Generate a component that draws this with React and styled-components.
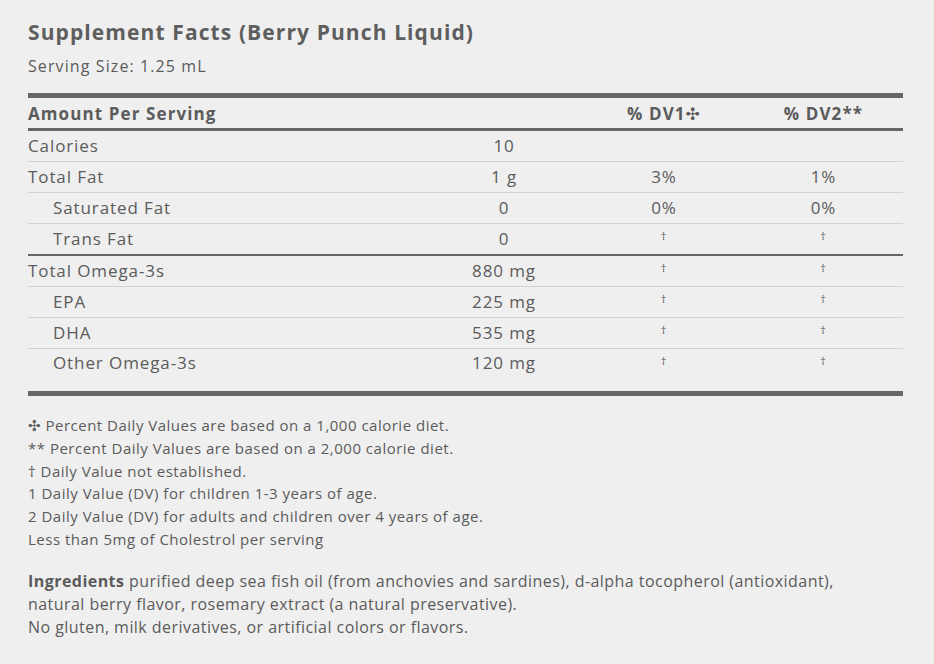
import styled, { createGlobalStyle } from "styled-components";

const GlobalStyle = createGlobalStyle`
  html, body {
    margin: 0;
    padding: 0;
    background: #efefef;
  }
  body {
    font-family: "Open Sans", "DejaVu Sans", sans-serif;
    color: #5b5b5b;
  }
`;

const Page = styled.div`
  width: 934px;
  height: 664px;
  box-sizing: border-box;
  padding: 17px 31px 0 28px;
  background: #efefef;
`;

const Title = styled.h2`
  margin: 0;
  font-size: 21px;
  font-weight: 700;
  line-height: 30px;
  letter-spacing: 1.1px;
  color: #5e5e5e;
`;

const Serving = styled.div`
  margin-top: 8px;
  font-size: 16px;
  line-height: 22px;
  letter-spacing: 1.1px;
`;

const Table = styled.table`
  width: 100%;
  margin-top: 16px;
  border-collapse: collapse;
  border-top: 5px solid #666;
  border-bottom: 5px solid #666;
  font-size: 17px;
  letter-spacing: 0.9px;
`;

const HeadCell = styled.th`
  height: 30px;
  padding: 0;
  font-weight: 700;
  font-size: 17px;
  letter-spacing: 1.1px;
  text-align: ${(p) => (p.$left ? "left" : "center")};
  border-bottom: 3px solid #666;
  color: #5b5b5b;
`;

const Row = styled.tr`
  border-bottom: ${(p) =>
    p.$last ? "none" : p.$heavy ? "2px solid #666" : "1px solid #d2d2d2"};
`;

const Cell = styled.td`
  height: ${(p) => (p.$tall ? "39px" : "30px")};
  vertical-align: ${(p) => (p.$tall ? "top" : "middle")};
  padding: ${(p) => (p.$tall ? "3px" : "0")} 0 0 ${(p) => (p.$indent ? "25px" : "0")};
  text-align: ${(p) => (p.$left ? "left" : "center")};
  line-height: 22px;
`;

const Dagger = styled.span`
  font-size: 11px;
  position: relative;
  top: -4px;
`;

const Notes = styled.div`
  margin-top: 18px;
  font-size: 15px;
  line-height: 22.8px;
  letter-spacing: 0.5px;
`;

const Ingredients = styled.p`
  margin: 19px 0 0;
  font-size: 16px;
  line-height: 23px;
  letter-spacing: 0.45px;
  b {
    font-weight: 700;
  }
`;

const rows = [
  { name: "Calories", amount: "10", dv1: "", dv2: "" },
  { name: "Total Fat", amount: "1 g", dv1: "3%", dv2: "1%" },
  { name: "Saturated Fat", amount: "0", dv1: "0%", dv2: "0%", indent: true },
  { name: "Trans Fat", amount: "0", dv1: "†", dv2: "†", indent: true, heavy: true },
  { name: "Total Omega-3s", amount: "880 mg", dv1: "†", dv2: "†" },
  { name: "EPA", amount: "225 mg", dv1: "†", dv2: "†", indent: true },
  { name: "DHA", amount: "535 mg", dv1: "†", dv2: "†", indent: true },
  { name: "Other Omega-3s", amount: "120 mg", dv1: "†", dv2: "†", indent: true, last: true },
];

const Value = ({ v }) => (v === "†" ? <Dagger>†</Dagger> : v);

export default function App() {
  return (
    <Page>
      <GlobalStyle />
      <Title>Supplement Facts (Berry Punch Liquid)</Title>
      <Serving>Serving Size: 1.25 mL</Serving>
      <Table>
        <colgroup>
          <col style={{ width: "396px" }} />
          <col style={{ width: "160px" }} />
          <col style={{ width: "160px" }} />
          <col style={{ width: "159px" }} />
        </colgroup>
        <thead>
          <tr>
            <HeadCell $left>Amount Per Serving</HeadCell>
            <HeadCell />
            <HeadCell>% DV1✣</HeadCell>
            <HeadCell>% DV2**</HeadCell>
          </tr>
        </thead>
        <tbody>
          {rows.map((r) => (
            <Row key={r.name} $heavy={r.heavy} $last={r.last}>
              <Cell $left $indent={r.indent} $tall={r.last}>
                {r.name}
              </Cell>
              <Cell $tall={r.last}>{r.amount}</Cell>
              <Cell $tall={r.last}>
                <Value v={r.dv1} />
              </Cell>
              <Cell $tall={r.last}>
                <Value v={r.dv2} />
              </Cell>
            </Row>
          ))}
        </tbody>
      </Table>
      <Notes>
        <div>✣ Percent Daily Values are based on a 1,000 calorie diet.</div>
        <div>** Percent Daily Values are based on a 2,000 calorie diet.</div>
        <div>† Daily Value not established.</div>
        <div>1 Daily Value (DV) for children 1-3 years of age.</div>
        <div>2 Daily Value (DV) for adults and children over 4 years of age.</div>
        <div>Less than 5mg of Cholestrol per serving</div>
      </Notes>
      <Ingredients>
        <b>Ingredients</b> purified deep sea fish oil (from anchovies and sardines), d-alpha tocopherol (antioxidant),
        <br />
        natural berry flavor, rosemary extract (a natural preservative).
        <br />
        No gluten, milk derivatives, or artificial colors or flavors.
      </Ingredients>
    </Page>
  );
}
